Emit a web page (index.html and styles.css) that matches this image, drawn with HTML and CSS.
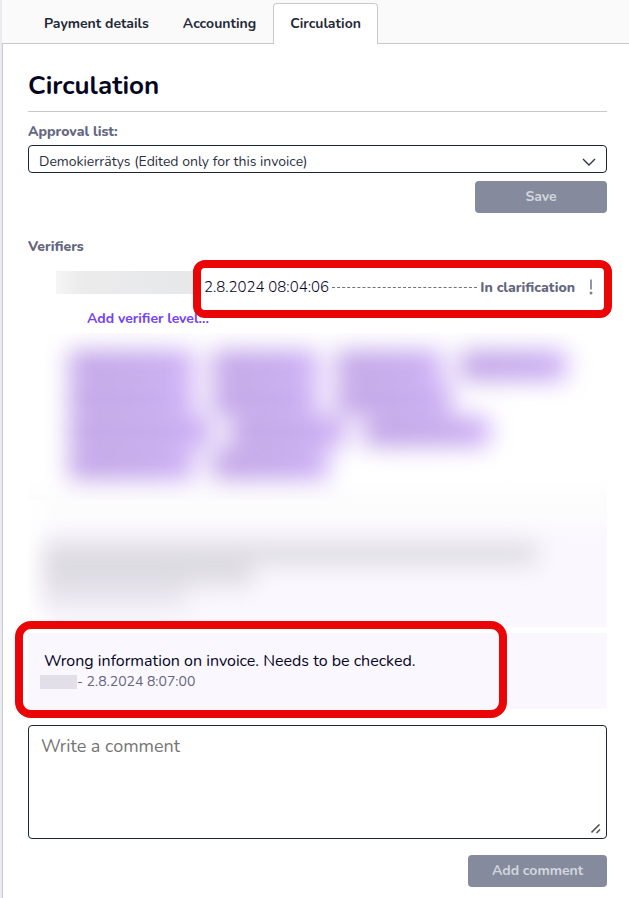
FILE: index.html
```
<!DOCTYPE html>
<html lang="en">
<head>
    <meta charset="UTF-8">
    <meta name="viewport" content="width=device-width, initial-scale=1.0">
    <title>Circulation</title>
    <link rel="stylesheet" href="styles.css">
</head>
<body>
    <nav class="tabs">
        <a class="tab" href="#payment">Payment details</a>
        <a class="tab" href="#accounting">Accounting</a>
        <a class="tab active" href="#circulation">Circulation</a>
    </nav>

    <main class="panel">
        <h1>Circulation</h1>

        <form class="approval">
            <label for="approval-list">Approval list:</label>
            <div class="select-wrap">
                <select id="approval-list" name="approval-list">
                    <option>Demokierrätys (Edited only for this invoice)</option>
                </select>
                <svg class="chevron" width="14" height="8" viewBox="0 0 14 8" aria-hidden="true"><path d="M1 1l6 6 6-6" fill="none" stroke="#2b3648" stroke-width="1.4"/></svg>
            </div>
            <button class="btn" type="submit" disabled>Save</button>
        </form>

        <h2>Verifiers</h2>
        <div class="verifier">
            <span class="hidden-name"></span>
            <span class="date">2.8.2024 08:04:06</span>
            <span class="leader"></span>
            <span class="status">In clarification</span>
            <svg class="mark" width="4" height="16" viewBox="0 0 4 16" aria-hidden="true"><path d="M2 0.5v10" stroke="#6d7086" stroke-width="1.5"/><circle cx="2" cy="14" r="1.5" fill="#7d8194"/></svg>
            <div class="highlight highlight-row"></div>
        </div>
        <a class="add-level" href="#add-level">Add verifier level...</a>

        <!-- hidden approvers -->
        <div class="blurred">
            <div class="tags">
                <div class="tag-row"><span class="tag wide"></span><span class="tag"></span><span class="tag"></span><span class="tag"></span></div>
                <div class="tag-row"><span class="tag wide"></span><span class="tag"></span><span class="tag mid"></span></div>
                <div class="tag-row"><span class="tag widest"></span><span class="tag mid"></span><span class="tag wide"></span></div>
                <div class="tag-row"><span class="tag wide"></span><span class="tag mid"></span></div>
            </div>
        </div>

        <div class="comment hidden-comment">
            <div class="lines">
                <span class="line line-long"></span>
                <span class="line line-mid"></span>
                <span class="line line-short"></span>
            </div>
        </div>

        <div class="comment">
            <p class="comment-text">Wrong information on invoice. Needs to be checked.</p>
            <p class="comment-meta"><span class="hidden-author"></span>- 2.8.2024 8:07:00</p>
            <div class="highlight highlight-comment"></div>
        </div>

        <form class="new-comment">
            <div class="textarea-wrap">
                <textarea name="comment" aria-label="Write a comment" placeholder="Write a comment"></textarea>
                <svg class="grip" width="10" height="10" viewBox="0 0 10 10" aria-hidden="true"><path d="M0.5 8.5l8-8M5.5 9l3.5-3.5" fill="none" stroke="#555" stroke-width="1.6"/></svg>
            </div>
            <button class="btn btn-wide" type="submit" disabled>Add comment</button>
        </form>
    </main>
</body>
</html>
```
FILE: styles.css
```
* {
    box-sizing: border-box;
}

body {
    margin: 0;
    padding-left: 2px;
    background: linear-gradient(to right, #e8ecf1 2px, #fff 2px);
    font-family: Nunito, Lato, sans-serif;
    font-size: 14px;
    color: #1f2937;
}

.tabs {
    display: flex;
    height: 44px;
    padding: 3px 0 0 25px;
    background: #fafafa;
    border-bottom: 1px solid #c9c9c9;
}

.tab {
    height: 41px;
    padding: 0 16px;
    border: 1px solid transparent;
    border-bottom: none;
    line-height: 40px;
    font-weight: bold;
    color: #1f2937;
    text-decoration: none;
}

.tab.active {
    background: #fff;
    border-color: #c9c9c9;
    border-radius: 4px 4px 0 0;
}

.panel {
    padding: 24px 22px 11px 25px;
    border-left: 1px solid #c9c9c9;
}

h1 {
    margin: 0;
    padding-bottom: 7px;
    border-bottom: 1px solid #c9c9c9;
    font-size: 26px;
    line-height: 36px;
    color: #05051e;
}

.approval {
    display: flex;
    flex-direction: column;
}

label, h2 {
    margin: 0;
    font-size: 14px;
    font-weight: 800;
    line-height: 20px;
    color: #64677f;
}

label {
    margin: 10px 0 3px;
}

.select-wrap {
    position: relative;
    margin-bottom: 8px;
}

select {
    display: block;
    width: 100%;
    height: 28px;
    padding: 4px 30px 0 10px;
    appearance: none;
    background: #fff;
    border: 1px solid #1c2635;
    border-radius: 4px;
    font: inherit;
    color: #2b3142;
}

.chevron {
    position: absolute;
    right: 11px;
    top: 13px;
}

.btn {
    align-self: flex-end;
    width: 132px;
    height: 32px;
    padding: 0 0 2px;
    background: #858b9d;
    border: none;
    border-radius: 4px;
    font: inherit;
    font-weight: bold;
    color: #d3d6de;
}

.btn-wide {
    width: 139px;
}

h2 {
    margin: 24px 0 14px;
}

.verifier {
    position: relative;
    display: flex;
    align-items: center;
    height: 32px;
    padding: 0 14px 0 28px;
    margin-bottom: 6px;
}

.hidden-name {
    align-self: flex-start;
    width: 137px;
    height: 23px;
    margin-right: 11px;
    background: linear-gradient(to right, #f5f5f5, #ebebec 20%, #e7e8ea);
}

.date {
    font-size: 15px;
    font-weight: 300;
    color: #05051e;
}

.leader {
    flex: 1;
    margin: 0 3px;
    border-top: 1px dashed #6f7280;
}

.status {
    font-weight: 800;
    color: #64677f;
}

.mark {
    margin-left: 14px;
}

.highlight {
    position: absolute;
    z-index: 1;
    border: 8px solid #ea0606;
    pointer-events: none;
}

.highlight-row {
    top: -11px;
    bottom: -15px;
    left: 165px;
    right: -5px;
    border-radius: 12px;
}

.add-level {
    display: block;
    width: max-content;
    margin-left: 59px;
    font-weight: bold;
    line-height: 20px;
    color: #7240f8;
    text-decoration: none;
}

.blurred {
    height: 167px;
    margin-top: 4px;
    padding: 18px 0 0 41px;
    overflow: hidden;
    background: linear-gradient(to bottom, #fff, #fff 145px, #fcfcfd);
}

.tags {
    display: flex;
    flex-direction: column;
    gap: 4px;
    filter: blur(12px);
}

.tag-row {
    display: flex;
    flex: none;
    gap: 18px;
    height: 29px;
}

.tag {
    width: 106px;
    background: linear-gradient(to right, #bf9fe6, #c0a3ea 60%, #cba9f8);
}

.mid {
    width: 116px;
}

.wide {
    width: 125px;
}

.widest {
    width: 143px;
}

.comment {
    position: relative;
    height: 76px;
    margin-bottom: 16px;
    padding: 17px 16px 0;
    background: #faf7fe;
}

.hidden-comment {
    height: 127px;
    margin-bottom: 6px;
    padding-top: 43px;
    overflow: hidden;
    background: linear-gradient(to right, #fff, transparent 30px),
                linear-gradient(to bottom, #fcfcfd 10px, #faf7fe 40px);
}

.lines {
    filter: blur(11px);
}

.line {
    display: block;
    height: 21px;
    background: #dddbe2;
}

.line-long {
    width: 90%;
}

.line-mid {
    width: 38%;
}

.line-short {
    width: 26%;
    background: #e7e4ed;
}

.comment-text {
    margin: 0;
    font-size: 16px;
    line-height: 22px;
    color: #05051e;
}

.comment-meta {
    display: flex;
    align-items: center;
    margin: 0 0 0 -4px;
    line-height: 20px;
    color: #64677f;
}

.hidden-author {
    width: 37px;
    height: 14px;
    background: #e2dfe9;
}

.highlight-comment {
    top: -12px;
    bottom: -9px;
    left: -13px;
    right: 100px;
    border-radius: 16px;
}

.new-comment {
    display: flex;
    flex-direction: column;
    gap: 16px;
}

.textarea-wrap {
    position: relative;
}

textarea {
    display: block;
    width: 100%;
    height: 114px;
    padding: 8px 12px;
    resize: none;
    border: 1px solid #1c2635;
    border-radius: 4px;
    font: inherit;
    font-size: 18px;
    line-height: 24px;
}

textarea::placeholder {
    color: #757575;
}

.grip {
    position: absolute;
    right: 6px;
    bottom: 5px;
    pointer-events: none;
}
```
